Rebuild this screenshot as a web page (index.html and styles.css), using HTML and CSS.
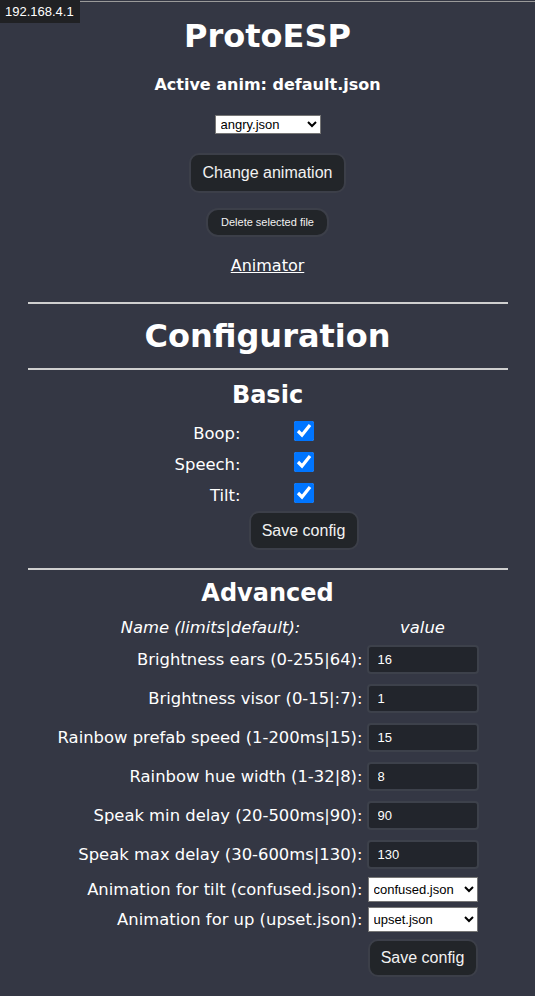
FILE: index.html
```html
<!DOCTYPE html>
<html lang="en">
<head>
<meta charset="utf-8">
<title>ProtoESP</title>
<link rel="stylesheet" href="styles.css">
</head>
<body>
<div class="topline"></div>
<div class="ip-badge">192.168.4.1</div>
<main class="page">
  <h1 class="title">ProtoESP</h1>
  <p class="active">Active anim: default.json</p>
  <select class="file-select">
    <option>angry.json</option>
    <option>default.json</option>
    <option>confused.json</option>
    <option>upset.json</option>
  </select>
  <div><button class="btn btn-change">Change animation</button></div>
  <div><button class="btn btn-delete">Delete selected file</button></div>
  <a class="link" href="#">Animator</a>
  <hr class="rule rule-1">
  <h1 class="title title-config">Configuration</h1>
  <hr class="rule rule-2">
  <h2 class="subtitle">Basic</h2>
  <div class="basic-grid">
    <label class="basic-label">Boop:</label><input class="check" type="checkbox" checked>
    <label class="basic-label">Speech:</label><input class="check" type="checkbox" checked>
    <label class="basic-label">Tilt:</label><input class="check" type="checkbox" checked>
    <span></span><button class="btn btn-save">Save config</button>
  </div>
  <hr class="rule rule-3">
  <h2 class="subtitle subtitle-adv">Advanced</h2>
  <div class="row row-head">
    <span class="head">Name (limits|default):</span>
    <span class="head">value</span>
  </div>
  <div class="row row-input first"><label class="adv-label">Brightness ears (0-255|64):</label><input class="num" type="text" value="16"></div>
  <div class="row row-input"><label class="adv-label">Brightness visor (0-15|:7):</label><input class="num" type="text" value="1"></div>
  <div class="row row-input"><label class="adv-label">Rainbow prefab speed (1-200ms|15):</label><input class="num" type="text" value="15"></div>
  <div class="row row-input"><label class="adv-label">Rainbow hue width (1-32|8):</label><input class="num" type="text" value="8"></div>
  <div class="row row-input"><label class="adv-label">Speak min delay (20-500ms|90):</label><input class="num" type="text" value="90"></div>
  <div class="row row-input"><label class="adv-label">Speak max delay (30-600ms|130):</label><input class="num" type="text" value="130"></div>
  <div class="row row-select first-select"><label class="adv-label">Animation for tilt (confused.json):</label>
    <select class="adv-select"><option>confused.json</option><option>angry.json</option><option>upset.json</option></select></div>
  <div class="row row-select"><label class="adv-label">Animation for up (upset.json):</label>
    <select class="adv-select"><option>upset.json</option><option>angry.json</option><option>confused.json</option></select></div>
  <div class="row row-save"><span></span><button class="btn btn-save">Save config</button></div>
</main>
</body>
</html>
```

FILE: styles.css
```css
html, body {
  margin: 0;
  padding: 0;
  background: #343744;
  color: #ffffff;
  font-family: "DejaVu Sans", Verdana, sans-serif;
}

body {
  min-height: 996px;
  position: relative;
}

.topline {
  position: absolute;
  top: 1px;
  left: 0;
  right: 0;
  height: 1px;
  background: #9a9a9a;
}

.ip-badge {
  position: absolute;
  top: 0;
  left: 0;
  height: 23px;
  line-height: 23px;
  padding: 0 6px 0 5px;
  background: #202124;
  color: #ffffff;
  font-family: "Liberation Sans", Arial, sans-serif;
  font-size: 13px;
}

.page {
  width: 480px;
  margin: 0 auto;
  text-align: center;
  padding-top: 1px;
}

.title {
  margin: 16px 0 0;
  font-size: 32px;
  line-height: 38px;
  font-weight: bold;
}

.active {
  margin: 20px 0 0;
  font-size: 16px;
  line-height: 20px;
  font-weight: bold;
}

.file-select {
  display: inline-block;
  margin: 20px 0 0;
  width: 106px;
  height: 19px;
  font-family: "Liberation Sans", Arial, sans-serif;
  font-size: 13px;
  background: #ffffff;
  color: #000000;
  border: 1px solid #767676;
  border-radius: 0;
  padding: 0 0 0 1px;
  vertical-align: top;
}

.btn {
  font-family: "Liberation Sans", Arial, sans-serif;
  color: #f2f2f2;
  background: #222529;
  border: 2px solid #3c3f49;
  border-radius: 10px;
  cursor: pointer;
}

.btn-change {
  margin-top: 19px;
  font-size: 16px;
  line-height: 18px;
  height: 40px;
  padding: 0 12px;
}

.btn-delete {
  margin-top: 15px;
  font-size: 11px;
  line-height: 13px;
  height: 29px;
  padding: 0 13px;
  border-radius: 12px;
}

.link {
  display: block;
  margin-top: 19px;
  font-size: 16px;
  line-height: 20px;
  color: #ffffff;
  text-decoration: underline;
}

.rule {
  border: none;
  height: 2px;
  background: #cfcfcf;
  margin: 0;
}

.rule-1 { margin-top: 26px; }

.title-config { margin-top: 13px; }

.rule-2 { margin-top: 13px; }

.subtitle {
  margin: 11px 0 0;
  font-size: 24px;
  line-height: 28px;
  font-weight: bold;
}

.basic-grid {
  margin-top: 6px;
  display: grid;
  grid-template-columns: 68px 118px;
  grid-template-rows: 31px 31px 31px auto;
  column-gap: 4px;
  justify-content: center;
  align-items: center;
}

.basic-label {
  text-align: right;
  font-size: 16.4px;
  line-height: 20px;
  padding-top: 7px;
}

.check {
  width: 20px;
  height: 20px;
  margin: 0;
  justify-self: center;
}

.btn-save {
  font-size: 16px;
  line-height: 18px;
  height: 39px;
  width: 110px;
  padding: 0;
  justify-self: center;
}

.basic-grid .btn-save {
  margin-top: 3px;
  align-self: start;
}

.rule-3 { margin-top: 18px; }

.subtitle-adv { margin-top: 9px; }

.row {
  display: grid;
  grid-template-columns: 310px 114px;
  justify-content: center;
  align-items: center;
}

.row-head {
  margin-top: 11px;
  font-style: italic;
  font-size: 16.4px;
  line-height: 20px;
}

.adv-label {
  text-align: right;
  padding-right: 3px;
  font-size: 16.4px;
  line-height: 20px;
}

.row-input { margin-top: 10px; }
.row-input.first { margin-top: 7px; }

.num {
  justify-self: center;
  box-sizing: border-box;
  width: 112px;
  height: 29px;
  margin: 0;
  padding: 0 9px;
  background: #22252c;
  border: 2px solid #3d414b;
  border-radius: 4px;
  color: #ffffff;
  font-family: "Liberation Sans", Arial, sans-serif;
  font-size: 13px;
  outline: none;
}

.row-select { margin-top: 5px; }
.row-select.first-select { margin-top: 8px; }

.adv-select {
  justify-self: center;
  box-sizing: border-box;
  width: 110px;
  height: 25px;
  margin: 0;
  padding: 0 0 0 1px;
  font-family: "Liberation Sans", Arial, sans-serif;
  font-size: 13px;
  background: #ffffff;
  color: #000000;
  border: 1px solid #767676;
  border-radius: 0;
}

.row-save { margin-top: 7px; }

.row-save .btn-save {
  height: 38px;
}
```
